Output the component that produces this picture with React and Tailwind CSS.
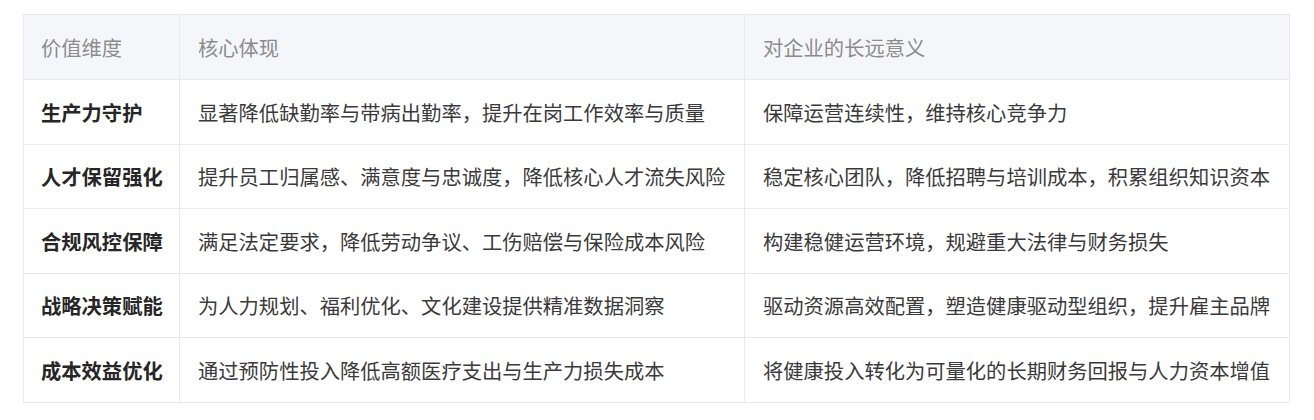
import React from 'react';

const rows = [
    ['生产力守护', '显著降低缺勤率与带病出勤率，提升在岗工作效率与质量', '保障运营连续性，维持核心竞争力'],
    ['人才保留强化', '提升员工归属感、满意度与忠诚度，降低核心人才流失风险', '稳定核心团队，降低招聘与培训成本，积累组织知识资本'],
    ['合规风控保障', '满足法定要求，降低劳动争议、工伤赔偿与保险成本风险', '构建稳健运营环境，规避重大法律与财务损失'],
    ['战略决策赋能', '为人力规划、福利优化、文化建设提供精准数据洞察', '驱动资源高效配置，塑造健康驱动型组织，提升雇主品牌'],
    ['成本效益优化', '通过预防性投入降低高额医疗支出与生产力损失成本', '将健康投入转化为可量化的长期财务回报与人力资本增值'],
];

const App = () => {
    return (
        <div className="min-h-[420px] bg-white pt-[14px] pl-[23px] font-['Noto_Sans_CJK_SC',sans-serif] text-[20.3px]">
            <table className="w-[1266px] table-fixed border-collapse border border-[#e9eaef]">
                <colgroup>
                    <col className="w-[156px]" />
                    <col className="w-[565px]" />
                    <col className="w-[545px]" />
                </colgroup>
                <thead>
                    <tr className="h-[65px] bg-[#f5f6fa] text-[#8c8c8c]">
                        <th className="border border-[#e9eaef] px-[17px] text-left font-normal">价值维度</th>
                        <th className="border border-[#e9eaef] px-[18px] text-left font-normal">核心体现</th>
                        <th className="border border-[#e9eaef] px-[18px] text-left font-normal">对企业的长远意义</th>
                    </tr>
                </thead>
                <tbody>
                    {rows.map(([name, core, meaning]) => (
                        <tr key={name} className="h-[64.6px] text-[#3a3a3a]">
                            <td className="border border-[#e9eaef] px-[17px] font-bold text-[#262626] whitespace-nowrap">{name}</td>
                            <td className="border border-[#e9eaef] px-[18px] whitespace-nowrap">{core}</td>
                            <td className="border border-[#e9eaef] px-[18px] whitespace-nowrap">{meaning}</td>
                        </tr>
                    ))}
                </tbody>
            </table>
        </div>
    );
};

export default App;
